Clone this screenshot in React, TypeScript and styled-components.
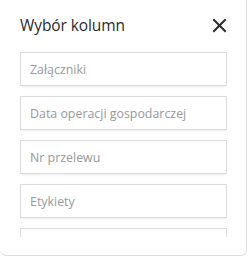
import React from 'react';
import styled, { createGlobalStyle } from 'styled-components';

const GlobalStyle = createGlobalStyle`
  html, body {
    margin: 0;
    padding: 0;
    background: #ffffff;
  }
  body {
    font-family: "Open Sans", "Noto Sans", sans-serif;
  }
`;

const Panel = styled.div`
  box-sizing: border-box;
  width: 247px;
  height: 256px;
  background: #ffffff;
  border-right: 1px solid #dddddd;
  border-bottom: 1px solid #dddddd;
  border-radius: 0 0 6px 6px;
  display: flex;
  flex-direction: column;
  padding: 0 19px 0 20px;
`;

const Header = styled.div`
  display: flex;
  align-items: center;
  justify-content: space-between;
  height: 52px;
  padding-bottom: 2px;
  box-sizing: border-box;
`;

const Title = styled.h2`
  margin: 0;
  font-size: 15.5px;
  font-weight: 400;
  color: #2b2b2b;
  letter-spacing: -0.1px;
`;

const CloseButton = styled.button`
  border: none;
  background: none;
  padding: 0;
  width: 15px;
  height: 15px;
  display: flex;
  cursor: pointer;
`;

const List = styled.div`
  display: flex;
  flex-direction: column;
  gap: 10px;
  height: 185px;
  overflow: hidden;
`;

const Field = styled.div`
  flex: none;
  box-sizing: border-box;
  height: 34px;
  border: 1px solid #dcdcdc;
  box-shadow: 0 1px 2px rgba(0, 0, 0, 0.08);
  display: flex;
  align-items: center;
  padding: 0 8px 0 9px;
  font-size: 12.4px;
  color: #999999;
`;

const columns = [
  'Załączniki',
  'Data operacji gospodarczej',
  'Nr przelewu',
  'Etykiety',
  '',
];

export default function App() {
  return (
    <>
      <GlobalStyle />
      <Panel>
        <Header>
          <Title>Wybór kolumn</Title>
          <CloseButton aria-label="Zamknij">
            <svg width="15" height="15" viewBox="0 0 15 15">
              <path d="M2 2 L13 13 M13 2 L2 13" stroke="#2b2b2b" strokeWidth="2" strokeLinecap="square" />
            </svg>
          </CloseButton>
        </Header>
        <List>
          {columns.map((c, i) => (
            <Field key={i}>{c}</Field>
          ))}
        </List>
      </Panel>
    </>
  );
}
